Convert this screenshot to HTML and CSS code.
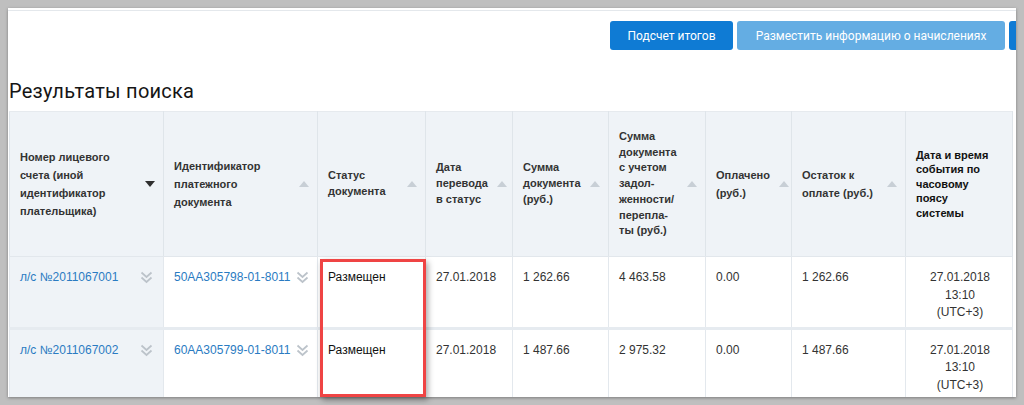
FILE: index.html
```html
<!DOCTYPE html>
<html lang="ru">
<head>
<meta charset="utf-8">
<title>Результаты поиска</title>
<link rel="stylesheet" href="styles.css">
</head>
<body>
<div class="panel">
  <div class="toolbar">
    <button class="btn btn-primary btn-total">Подсчет итогов</button>
    <button class="btn btn-light btn-place">Разместить информацию о начислениях</button>
    <button class="btn btn-primary btn-cut"></button>
  </div>
  <h1 class="title">Результаты поиска</h1>
  <div class="table-wrap">
    <table class="grid">
      <colgroup>
        <col class="c1"><col class="c2"><col class="c3"><col class="c4"><col class="c5"><col class="c6"><col class="c7"><col class="c8"><col class="c9">
      </colgroup>
      <thead>
        <tr>
          <th><div class="hc"><span>Номер лицевого<br>счета (иной<br>идентификатор<br>плательщика)</span><i class="tri down"></i></div></th>
          <th><div class="hc"><span>Идентификатор<br>платежного<br>документа</span><i class="tri"></i></div></th>
          <th class="lh16"><div class="hc"><span>Статус<br>документа</span><i class="tri"></i></div></th>
          <th class="lh16 pr5"><div class="hc"><span>Дата<br>перевода<br>в статус</span><i class="tri"></i></div></th>
          <th class="lh16"><div class="hc"><span>Сумма<br>документа<br>(руб.)</span><i class="tri"></i></div></th>
          <th class="lh16"><div class="hc"><span>Сумма<br>документа<br>с учетом<br>задол-<br>женности/<br>перепла-<br>ты (руб.)</span><i class="tri"></i></div></th>
          <th class="pr2"><div class="hc"><span>Оплачено<br>(руб.)</span><i class="tri"></i></div></th>
          <th><div class="hc"><span>Остаток к<br>оплате (руб.)</span><i class="tri"></i></div></th>
          <th class="lh14 strong"><div class="hc"><span>Дата и время<br>события по<br>часовому<br>поясу<br>системы</span></div></th>
        </tr>
      </thead>
      <tbody>
        <tr>
          <td class="acc"><div class="lc"><a href="#">л/с №2011067001</a><svg class="chev" width="13" height="13" viewBox="0 0 13 13"><polyline points="1.5,1.5 6.5,6 11.5,1.5"/><polyline points="1.5,6.5 6.5,11 11.5,6.5"/></svg></div></td>
          <td><div class="lc"><a href="#">50АА305798-01-8011</a><svg class="chev" width="13" height="13" viewBox="0 0 13 13"><polyline points="1.5,1.5 6.5,6 11.5,1.5"/><polyline points="1.5,6.5 6.5,11 11.5,6.5"/></svg></div></td>
          <td class="status">Размещен</td>
          <td>27.01.2018</td>
          <td>1 262.66</td>
          <td>4 463.58</td>
          <td>0.00</td>
          <td>1 262.66</td>
          <td class="center">27.01.2018<br>13:10<br>(UTC+3)</td>
        </tr>
        <tr>
          <td class="acc"><div class="lc"><a href="#">л/с №2011067002</a><svg class="chev" width="13" height="13" viewBox="0 0 13 13"><polyline points="1.5,1.5 6.5,6 11.5,1.5"/><polyline points="1.5,6.5 6.5,11 11.5,6.5"/></svg></div></td>
          <td><div class="lc"><a href="#">60АА305799-01-8011</a><svg class="chev" width="13" height="13" viewBox="0 0 13 13"><polyline points="1.5,1.5 6.5,6 11.5,1.5"/><polyline points="1.5,6.5 6.5,11 11.5,6.5"/></svg></div></td>
          <td class="status">Размещен</td>
          <td>27.01.2018</td>
          <td>1 487.66</td>
          <td>2 975.32</td>
          <td>0.00</td>
          <td>1 487.66</td>
          <td class="center">27.01.2018<br>13:10<br>(UTC+3)</td>
        </tr>
      </tbody>
    </table>
  </div>
  <div class="highlight"></div>
</div>
</body>
</html>
```

FILE: styles.css
```css
html, body {
  margin: 0;
  padding: 0;
}
body {
  background: #bfbfbf;
  width: 1024px;
  height: 405px;
  overflow: hidden;
}
.panel {
  position: relative;
  margin: 8px 8px 0 8px;
  height: 389px;
  background: #ffffff;
  box-shadow: 0 1px 3px rgba(0, 0, 0, 0.35);
  display: flex;
  flex-direction: column;
  padding-top: 2px;
  box-sizing: border-box;
}
.toolbar {
  border-top: 1px solid #e4e8ec;
  padding: 10px 0 0 602px;
  display: flex;
  gap: 4px;
  overflow: hidden;
  flex-shrink: 0;
}
.btn {
  flex-shrink: 0;
  height: 29px;
  border: none;
  border-radius: 3px;
  padding: 0;
  font-family: Roboto, "Liberation Sans", sans-serif;
  font-size: 12px;
  letter-spacing: 0;
  color: #ffffff;
  text-align: center;
  cursor: pointer;
}
.btn-total {
  width: 123px;
}
.btn-place {
  width: 268px;
}
.btn-primary {
  background: #0f7bd4;
}
.btn-light {
  background: #64ade3;
}
.btn-cut {
  width: 60px;
}
.title {
  margin: 29px 0 0 1px;
  font-family: Roboto, "Liberation Sans", sans-serif;
  font-weight: 400;
  font-size: 20px;
  letter-spacing: 0.25px;
  line-height: 24px;
  color: #151515;
  flex-shrink: 0;
}
.table-wrap {
  margin: 8px 0 0 1px;
  flex: 1;
  min-height: 0;
  overflow: hidden;
}
.grid {
  table-layout: fixed;
  width: 1003px;
  border-collapse: collapse;
  font-family: "Liberation Sans", Arial, sans-serif;
}
.c1 { width: 154px; }
.c2 { width: 154px; }
.c3 { width: 108px; }
.c4 { width: 87px; }
.c5 { width: 96px; }
.c6 { width: 97px; }
.c7 { width: 86px; }
.c8 { width: 114px; }
.c9 { width: 107px; }
.grid th {
  height: 144px;
  background: #eff3f7;
  border-top: 1px solid #e6eaee;
  border-right: 1px solid #dfe5ea;
  border-bottom: 1px solid #e2e7ec;
  border-left: 1px solid #dfe5ea;
  padding: 0 8px 0 10px;
  text-align: left;
  vertical-align: middle;
  font-size: 11px;
  font-weight: 700;
  line-height: 18px;
  color: #333333;
}
.grid th.lh16 { line-height: 15.7px; }
.grid th.lh14 { line-height: 14.4px; }
.grid th.pr5 { padding-right: 5px; }
.grid th.pr2 { padding-right: 2px; }
.grid th.strong { color: #111111; }
.hc {
  display: flex;
  align-items: center;
  justify-content: space-between;
  gap: 4px;
}
.tri {
  flex-shrink: 0;
  width: 0;
  height: 0;
  border-left: 5.5px solid transparent;
  border-right: 5.5px solid transparent;
  border-bottom: 6px solid #c8cfd6;
}
.tri.down {
  border-bottom: none;
  border-top: 6px solid #2f2f2f;
}
.grid td {
  padding: 12px 8px 5px 10px;
  vertical-align: top;
  font-size: 12px;
  line-height: 17.5px;
  color: #333333;
  border-left: 1px solid #e3e8ed;
  border-right: 1px solid #e3e8ed;
  border-bottom: 3px solid #e6ebf0;
}
.grid td.acc {
  background: #eff3f7;
  padding-right: 10px;
}
.grid td.status {
  color: #111111;
}
.grid td.center {
  text-align: center;
}
.lc {
  display: flex;
  justify-content: space-between;
  align-items: flex-start;
  gap: 4px;
}
.lc a {
  color: #2a7bc2;
  text-decoration: none;
  white-space: nowrap;
}
.chev {
  flex-shrink: 0;
  margin-top: 2px;
  fill: none;
  stroke: #bcc3ca;
  stroke-width: 1.7;
}
.highlight {
  position: absolute;
  left: 312px;
  top: 251px;
  width: 106px;
  height: 138px;
  box-sizing: border-box;
  border: 3px solid #ef4444;
  box-shadow: 2px 3px 6px rgba(0, 0, 0, 0.35);
}
```
